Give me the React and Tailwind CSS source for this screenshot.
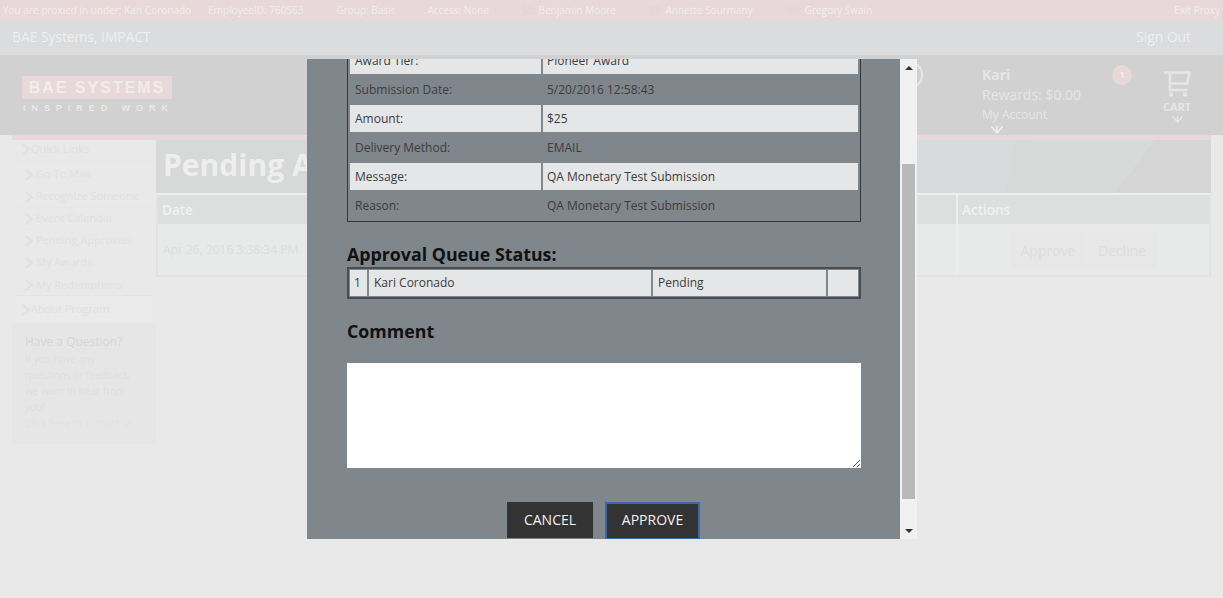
const DownArrow = ({ className }) => (
  <svg viewBox="0 0 14 10" className={className} fill="none" stroke="currentColor" strokeWidth="1.6">
    <path d="M1.5 1.5 L7 8 L12.5 1.5 M7 1 V8" />
  </svg>
);

const LinkArrow = () => (
  <svg viewBox="0 0 10 14" className="h-[14px] w-[9px] shrink-0 text-[#e1e1e1]" fill="none" stroke="currentColor" strokeWidth="1.4">
    <path d="M1 1 L7.5 7 L1 13 M3 1 L9.5 7 L3 13" />
  </svg>
);

const CartIcon = () => (
  <svg viewBox="0 0 28 28" className="h-[28px] w-[28px]" fill="none" stroke="currentColor" strokeWidth="2.6">
    <path d="M1 2.5 H26.5 L24 13.5 H8 M7 2.5 V20 H24" />
    <circle cx="8" cy="24.5" r="2.2" fill="currentColor" stroke="none" />
    <circle cx="22" cy="24.5" r="2.2" fill="currentColor" stroke="none" />
  </svg>
);

const links = ["Go To Mall", "Recognize Someone", "Event Calendar", "Pending Approvals", "My Awards", "My Redemptions"];

const Sidebar = () => (
  <aside className="w-[144px] shrink-0 text-[#e0e0e0]">
    <div className="ml-[3px] flex h-[22px] w-[138px] items-center gap-[1px] border-b border-[#e6e6e6] pb-[3px] pl-[6px] text-[11px]">
      <LinkArrow />
      <span>Quick Links</span>
    </div>
    <ul className="ml-[3px] h-[134px] w-[138px] border-b border-[#e5e5e5] pt-[2px] text-[11px]">
      {links.map((link) => (
        <li key={link} className="flex h-[22px] items-center gap-[3px] border-b border-[#e7e7e7] pl-[9px] last:border-b-0">
          <LinkArrow />
          <span>{link}</span>
        </li>
      ))}
    </ul>
    <div className="ml-[3px] flex h-[27px] w-[138px] items-center gap-[1px] bg-[#eaeaea] pl-[6px] text-[11px]">
      <LinkArrow />
      <span>About Program</span>
    </div>
    <div className="h-[121px] bg-[#e6e6e6] pl-[13px] pt-[11px]">
      <h3 className="text-[12px] leading-[16px] text-[#d6d6d6]">Have a Question?</h3>
      <p className="mt-[1px] w-[115px] text-[10px] leading-[16px] text-[#dedede]">If you have any questions or feedback, we want to hear from you!</p>
      <p className="whitespace-nowrap text-[10px] leading-[16px] text-[#e1e1e1]">Click here to contact us.</p>
    </div>
  </aside>
);

const PageBehind = () => (
  <div>
    <div className="flex h-[20px] items-center bg-[#e8d8d9] pl-[3px] pr-[3px] text-[10px] text-[#f1eeee]">
      <span>You are proxied in under: Kari Coronado</span>
      <span className="ml-[17px]">EmployeeID: 760563</span>
      <span className="ml-[33px]">Group: Basic</span>
      <span className="ml-[32px]">Access: None</span>
      <span className="ml-[33px]"><span className="text-[#e0d6d6]">S0:</span> Benjamin Moore</span>
      <span className="ml-[33px]"><span className="text-[#e0d6d6]">S1:</span> Annette Sourmany</span>
      <span className="ml-[33px]"><span className="text-[#e0d6d6]">BH:</span> Gregory Swain</span>
      <span className="ml-auto font-medium">Exit Proxy</span>
    </div>

    <div className="flex h-[35px] items-center justify-between bg-[#dbdcde] pl-[12px] pr-[32px] text-[13.8px] text-[#eeeff0]">
      <span>BAE Systems, IMPACT</span>
      <span>Sign Out</span>
    </div>

    <header className="flex h-[80px] bg-[#d1d1d1] text-[#e6e6e6]">
      <div className="ml-[22px] mt-[21px] w-[150px]">
        <div className="flex h-[23px] items-center justify-center bg-[#e8d8d9] font-['Liberation_Sans',sans-serif] text-[16px] font-bold tracking-[2px] text-[#efeded]">BAE SYSTEMS</div>
        <div className="mt-[2px] whitespace-nowrap pl-[1px] font-['Liberation_Sans',sans-serif] text-[9px] font-bold leading-[14px] tracking-[5.95px] text-[#e9e9e9]">INSPIRED WORK</div>
      </div>
      <div className="ml-[727px] mt-[7px] h-[26px] w-[24px] shrink-0 rounded-full border-2 border-[#e6e6e6]" />
      <div className="ml-[59px] mt-[11px] w-[130px] shrink-0">
        <div className="text-[14px] font-bold leading-[18px]">Kari</div>
        <div className="mt-[1px] text-[14px] leading-[20px]">Rewards: $0.00</div>
        <div className="text-[12px] leading-[19px]">My Account</div>
        <DownArrow className="ml-[8px] mt-[1px] h-[10px] w-[14px] text-[#f0f0f0]" />
      </div>
      <div className="mt-[10px] flex h-[20px] w-[20px] shrink-0 items-center justify-center rounded-full bg-[#e8d8d9] text-[9px] font-bold text-[#f1eeee]">1</div>
      <div className="ml-[25px] mt-[15px] flex w-[40px] shrink-0 flex-col items-center">
        <CartIcon />
        <span className="mt-[2px] text-[11px] font-bold leading-[14px]">CART</span>
        <DownArrow className="mt-[1px] h-[9px] w-[13px]" />
      </div>
    </header>

    <div className="mx-[12px] h-[5px] bg-[#e8d8d9]" />

    <div className="mx-[12px] flex">
      <Sidebar />
      <main className="min-w-0 flex-1">
        <div className="relative h-[53px] overflow-hidden bg-[#d7d8d8]">
          <svg viewBox="0 0 1056 53" className="absolute inset-0 h-full w-full" preserveAspectRatio="none">
            <polygon points="760,0 860,0 850,53 745,53" fill="#d9dadb" />
            <polygon points="880,0 1000,0 985,35 900,53" fill="#d8d9d9" />
            <polygon points="1000,0 1056,0 1056,53 960,53" fill="#d5d5d5" />
          </svg>
          <h1 className="relative pl-[7px] pt-[6px] text-[30px] font-bold leading-[38px] text-[#eeeeee]">Pending Approvals</h1>
        </div>
        <div className="h-[84px] border-2 border-[#e2e4e4] border-t-[#efefef] bg-[#e8e9e9]">
          <div className="flex h-[29px] items-center bg-[#dddfdf] text-[13.5px] font-semibold text-[#f1f1f1]">
            <span className="w-[798px] pl-[4px] pt-[1px]">Date</span>
            <span className="flex h-full flex-1 items-center border-l-2 border-[#eeeeee] pl-[4px] pt-[1px]">Actions</span>
          </div>
          <div className="flex h-[51px] items-center text-[12px] text-[#dddddd]">
            <span className="w-[798px] pl-[5px] pt-[1px]">Apr 26, 2016 3:38:34 PM</span>
            <div className="flex h-full flex-1 items-center border-l-2 border-[#ececec] pl-[53px] text-[14px]">
              <span className="flex h-[36px] w-[74px] items-center justify-center bg-[#e7e7e7] pt-[1px]">Approve</span>
              <span className="ml-[2px] flex h-[36px] w-[70px] items-center justify-center bg-[#e7e7e7] pt-[1px]">Decline</span>
            </div>
          </div>
        </div>
      </main>
    </div>
  </div>
);

const detailRows = [
  ["Award Tier:", "Pioneer Award"],
  ["Submission Date:", "5/20/2016 12:58:43"],
  ["Amount:", "$25"],
  ["Delivery Method:", "EMAIL"],
  ["Message:", "QA Monetary Test Submission"],
  ["Reason:", "QA Monetary Test Submission"],
];

const ScrollArrow = ({ up }) => (
  <svg viewBox="0 0 8 4" className="h-[4px] w-[8px] fill-[#333333]">
    <polygon points={up ? "4,0 8,4 0,4" : "0,0 8,0 4,4"} />
  </svg>
);

const Modal = () => (
  <div className="absolute left-[307px] top-[59px] flex h-[480px] w-[610px]">
    <div className="h-full w-[593px] overflow-hidden bg-[#7f868c] pl-[40px] text-[12px] text-[#3d3d3d]">
      <table className="mt-[-15px] w-[514px] table-fixed border-separate border-spacing-[2px] border border-[#33383c]">
        <colgroup>
          <col className="w-[191px]" />
          <col />
        </colgroup>
        <tbody>
          {detailRows.map(([label, value], i) => (
            <tr key={label} className={i % 2 === 0 ? "h-[27px] bg-[#e4e6e8]" : "h-[27px]"}>
              <td className="px-[5px] py-0">{label}</td>
              <td className="px-[4px] py-0">{value}</td>
            </tr>
          ))}
        </tbody>
      </table>

      <h2 className="mt-[20px] text-[17.8px] font-bold leading-[24px] text-[#111111]">Approval Queue Status:</h2>
      <table className="mt-[1px] w-[514px] table-fixed border-separate border-spacing-[1px] border-2 border-[#484d51]">
        <colgroup>
          <col className="w-[17px]" />
          <col className="w-[283px]" />
          <col className="w-[174px]" />
          <col />
        </colgroup>
        <tbody>
          <tr className="h-[26px] bg-[#e4e6e8]">
            <td className="px-[4px] py-0">1</td>
            <td className="border-l border-[#7f868c] px-[5px] py-0">Kari Coronado</td>
            <td className="border-l border-[#7f868c] px-[5px] py-0">Pending</td>
            <td className="border-l border-[#7f868c] py-0" />
          </tr>
        </tbody>
      </table>

      <h2 className="mt-[20px] text-[17.8px] font-bold leading-[24px] text-[#111111]">Comment</h2>
      <textarea className="mt-[20px] block h-[105px] w-[514px] bg-white outline-none" />

      <div className="mt-[34px] flex pl-[160px] text-[14px] text-[#f2f2f2]">
        <button className="h-[36px] w-[86px] bg-[#333333] pb-[2px]">CANCEL</button>
        <button className="ml-[12px] h-[38px] w-[95px] shrink-0 border-2 border-[#3a69ab] bg-[#333333] pb-[3px]">APPROVE</button>
      </div>
    </div>

    <div className="flex h-full w-[17px] flex-col items-center bg-[#f1f1f1]">
      <div className="flex h-[17px] items-center pt-[1px]"><ScrollArrow up /></div>
      <div className="mt-[88px] h-[335px] w-[13px] bg-[#b9b9b9]" />
      <div className="mt-auto flex h-[17px] items-center"><ScrollArrow /></div>
    </div>
  </div>
);

export default function App() {
  return (
    <div className="relative h-[598px] w-[1223px] overflow-hidden bg-[#e9e9e9] font-['Open_Sans',sans-serif]">
      <PageBehind />
      <Modal />
    </div>
  );
}
